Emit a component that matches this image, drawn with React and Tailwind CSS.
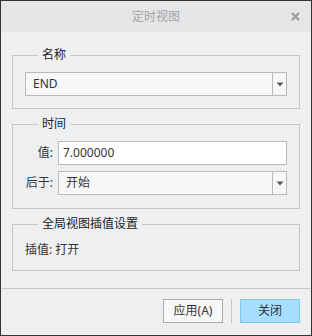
const font = { fontFamily: '"Noto Sans", "Noto Sans CJK SC", sans-serif' };

const Arrow = () => (
  <svg width="8" height="5" viewBox="0 0 8 5">
    <path d="M0.5 0.5 H7.5 L4 4.5 Z" fill="#5a5a5a" />
  </svg>
);

const Combo = ({ value }) => (
  <div className="flex h-[24px] border border-[#bababa] bg-[#f7f7f7]">
    <div className="flex-1 flex items-center pl-[7px] text-[12px] text-[#333]">{value}</div>
    <div className="w-[14px] border-l border-[#bababa] flex items-center justify-center">
      <Arrow />
    </div>
  </div>
);

const Group = ({ title, className, children }) => (
  <fieldset className={"border border-[#c6c7c9] " + className}>
    <legend className="ml-[13px] px-[4px] text-[12px] leading-[14px] text-[#222]">{title}</legend>
    {children}
  </fieldset>
);

export default function App() {
  return (
    <div
      style={font}
      className="w-[312px] h-[336px] border border-[#333] bg-[#eeeff1] flex flex-col"
    >
      <div className="h-[31px] bg-[#e5e6e8] flex items-center justify-center relative">
        <span className="text-[12px] text-[#a4a4a4] mt-[1px]">定时视图</span>
        <svg className="absolute right-[11px] top-[11px]" width="9" height="9" viewBox="0 0 9 9">
          <path d="M1 1 L8 8 M8 1 L1 8" stroke="#9c9c9c" strokeWidth="2.4" />
        </svg>
      </div>

      <div className="flex-1 px-[11px] pt-[16px] flex flex-col gap-[8px]">
        <Group title="名称" className="px-[12px] pt-[10px] pb-[12px]">
          <Combo value="END" />
        </Group>

        <Group title="时间" className="px-[12px] pt-[10px] pb-[13px]">
          <div className="grid grid-cols-[28px_1fr] gap-x-[5px] gap-y-[6px] items-center text-[12px] text-[#333]">
            <div className="text-right">值:</div>
            <div className="h-[24px] border border-[#bababa] bg-white flex items-center pl-[4px]">
              7.000000
            </div>
            <div className="text-right">后于:</div>
            <Combo value="开始" />
          </div>
        </Group>

        <Group title="全局视图插值设置" className="px-[12px] pt-[11px] pb-[12px]">
          <div className="text-[12px] leading-[16px] text-[#333]">插值: 打开</div>
        </Group>
      </div>

      <div className="mx-[1px] h-px bg-[#c6c7c9]" />
      <div className="h-[46px] flex justify-end items-start pt-[10px] pr-[11px] gap-[8px]">
        <button className="w-[60px] h-[24px] border border-[#acacac] bg-[#f7f7f7] text-[12px] text-[#333]">
          应用(A)
        </button>
        <div className="w-px h-[24px] bg-[#c8c8c8]" />
        <button className="w-[60px] h-[24px] border border-[#7ccbf6] bg-[#a6defd] text-[12px] text-[#333]">
          关闭
        </button>
      </div>
    </div>
  );
}
